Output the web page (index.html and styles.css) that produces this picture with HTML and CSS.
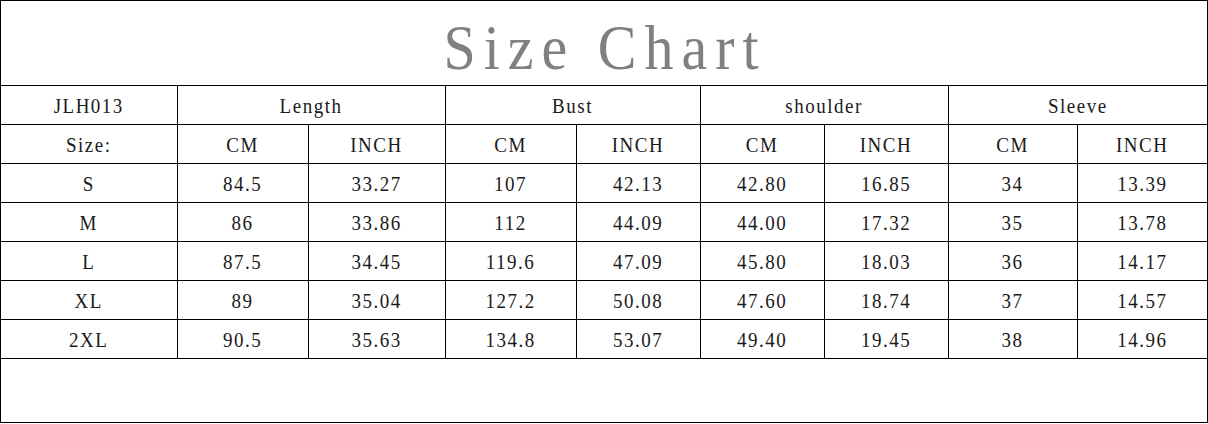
FILE: index.html
```html
<!DOCTYPE html>
<html>
<head>
<meta charset="utf-8">
<link rel="stylesheet" href="styles.css">
</head>
<body>
<div class="chart">
  <div class="title"><span class="title-text">Size Chart</span></div>
  <table class="grid">
    <colgroup>
      <col class="c-size"><col class="c-131"><col class="c-137"><col class="c-131"><col class="c-124"><col class="c-124"><col class="c-124"><col class="c-129"><col class="c-130">
    </colgroup>
    <tr><td><span class="t">JLH013</span></td><td colspan="2"><span class="t">Length</span></td><td colspan="2"><span class="t">Bust</span></td><td colspan="2"><span class="t">shoulder</span></td><td colspan="2"><span class="t">Sleeve</span></td></tr>
    <tr><td><span class="t">Size:</span></td><td><span class="t">CM</span></td><td><span class="t">INCH</span></td><td><span class="t">CM</span></td><td><span class="t">INCH</span></td><td><span class="t">CM</span></td><td><span class="t">INCH</span></td><td><span class="t">CM</span></td><td><span class="t">INCH</span></td></tr>
    <tr><td><span class="t">S</span></td><td><span class="t">84.5</span></td><td><span class="t">33.27</span></td><td><span class="t">107</span></td><td><span class="t">42.13</span></td><td><span class="t">42.80</span></td><td><span class="t">16.85</span></td><td><span class="t">34</span></td><td><span class="t">13.39</span></td></tr>
    <tr><td><span class="t">M</span></td><td><span class="t">86</span></td><td><span class="t">33.86</span></td><td><span class="t">112</span></td><td><span class="t">44.09</span></td><td><span class="t">44.00</span></td><td><span class="t">17.32</span></td><td><span class="t">35</span></td><td><span class="t">13.78</span></td></tr>
    <tr><td><span class="t">L</span></td><td><span class="t">87.5</span></td><td><span class="t">34.45</span></td><td><span class="t">119.6</span></td><td><span class="t">47.09</span></td><td><span class="t">45.80</span></td><td><span class="t">18.03</span></td><td><span class="t">36</span></td><td><span class="t">14.17</span></td></tr>
    <tr><td><span class="t">XL</span></td><td><span class="t">89</span></td><td><span class="t">35.04</span></td><td><span class="t">127.2</span></td><td><span class="t">50.08</span></td><td><span class="t">47.60</span></td><td><span class="t">18.74</span></td><td><span class="t">37</span></td><td><span class="t">14.57</span></td></tr>
    <tr><td><span class="t">2XL</span></td><td><span class="t">90.5</span></td><td><span class="t">35.63</span></td><td><span class="t">134.8</span></td><td><span class="t">53.07</span></td><td><span class="t">49.40</span></td><td><span class="t">19.45</span></td><td><span class="t">38</span></td><td><span class="t">14.96</span></td></tr>
  </table>
</div>
</body>
</html>
```

FILE: styles.css
```css
html, body {
  margin: 0;
  padding: 0;
  background: #fff;
}

.chart {
  box-sizing: border-box;
  width: 1208px;
  height: 423px;
  border: 1px solid #000;
  font-family: "Liberation Serif", serif;
  color: #1a1a1a;
}

.title {
  height: 84px;
  display: flex;
  align-items: center;
  justify-content: center;
}

.title-text {
  display: inline-block;
  font-size: 58px;
  color: #808080;
  letter-spacing: 8px;
  transform: scaleY(1.1);
  padding-left: 2px;
  margin-top: 8px;
}

.grid {
  border-collapse: collapse;
  table-layout: fixed;
  width: 1206px;
}

.c-size { width: 176px; }
.c-131 { width: 131px; }
.c-137 { width: 137px; }
.c-124 { width: 124px; }
.c-129 { width: 129px; }
.c-130 { width: 130px; }

.grid td {
  border: 1px solid #000;
  height: 35px;
  padding: 3px 0 0 0;
  text-align: center;
  vertical-align: middle;
  font-size: 19px;
  line-height: 20px;
  letter-spacing: 1.5px;
}

.grid td:first-child {
  border-left: none;
}

.grid td:last-child {
  border-right: none;
}

.t {
  display: inline-block;
  transform: scaleY(1.05);
}
```
